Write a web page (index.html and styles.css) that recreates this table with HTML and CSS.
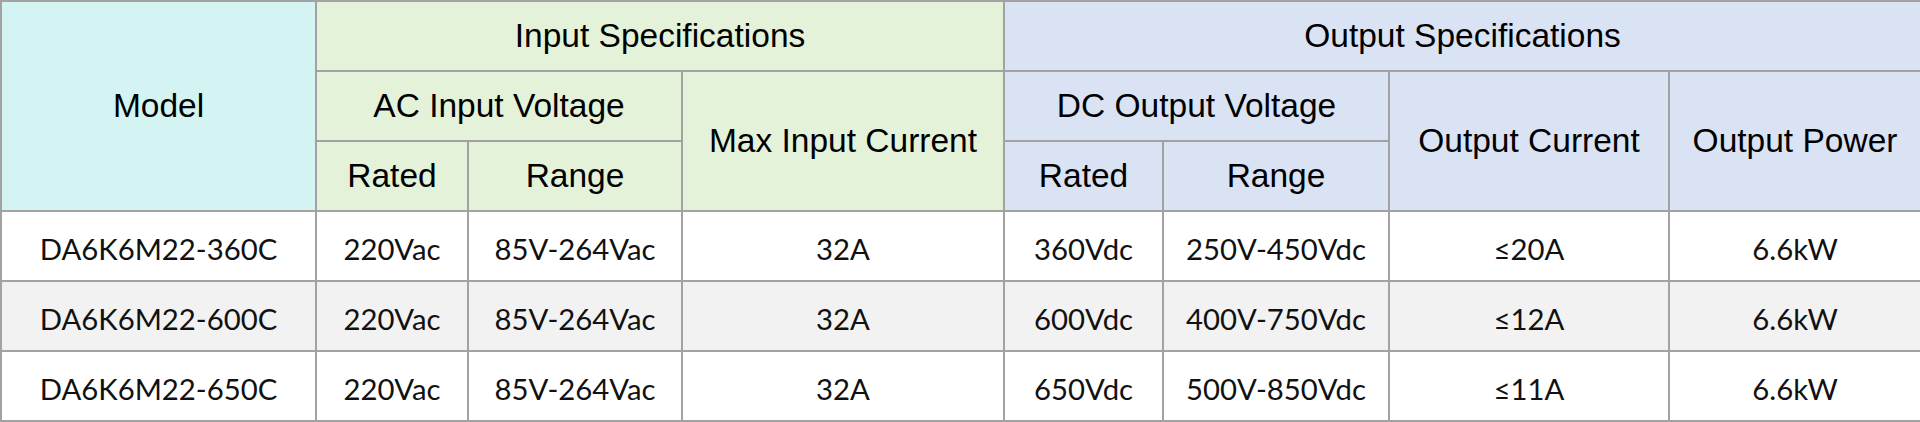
FILE: index.html
```html
<!DOCTYPE html>
<html>
<head>
<meta charset="utf-8">
<link rel="stylesheet" href="styles.css">
</head>
<body>
<table class="spec">
  <colgroup>
    <col class="c-model">
    <col class="c-irated">
    <col class="c-irange">
    <col class="c-imax">
    <col class="c-orated">
    <col class="c-orange">
    <col class="c-ocur">
    <col class="c-opow">
  </colgroup>
  <thead>
    <tr>
      <th rowspan="3" class="model">Model</th>
      <th colspan="3" class="in">Input Specifications</th>
      <th colspan="4" class="out">Output Specifications</th>
    </tr>
    <tr>
      <th colspan="2" class="in">AC Input Voltage</th>
      <th rowspan="2" class="in">Max Input Current</th>
      <th colspan="2" class="out">DC Output Voltage</th>
      <th rowspan="2" class="out">Output Current</th>
      <th rowspan="2" class="out">Output Power</th>
    </tr>
    <tr>
      <th class="in">Rated</th>
      <th class="in">Range</th>
      <th class="out">Rated</th>
      <th class="out">Range</th>
    </tr>
  </thead>
  <tbody>
    <tr>
      <td>DA6K6M22-360C</td><td>220Vac</td><td>85V-264Vac</td><td>32A</td>
      <td>360Vdc</td><td>250V-450Vdc</td><td>≤20A</td><td>6.6kW</td>
    </tr>
    <tr class="alt">
      <td>DA6K6M22-600C</td><td>220Vac</td><td>85V-264Vac</td><td>32A</td>
      <td>600Vdc</td><td>400V-750Vdc</td><td>≤12A</td><td>6.6kW</td>
    </tr>
    <tr>
      <td>DA6K6M22-650C</td><td>220Vac</td><td>85V-264Vac</td><td>32A</td>
      <td>650Vdc</td><td>500V-850Vdc</td><td>≤11A</td><td>6.6kW</td>
    </tr>
  </tbody>
</table>
</body>
</html>
```

FILE: styles.css
```css
html, body {
  margin: 0;
  padding: 0;
  background: #ffffff;
}

.spec {
  border-collapse: collapse;
  table-layout: fixed;
  width: 1920px;
  color: #000000;
}

.c-model { width: 315px; }
.c-irated { width: 152px; }
.c-irange { width: 214px; }
.c-imax { width: 322px; }
.c-orated { width: 159px; }
.c-orange { width: 226px; }
.c-ocur { width: 280px; }
.c-opow { width: 252px; }

.spec th,
.spec td {
  border: 2px solid #a2a2a2;
  text-align: center;
  vertical-align: middle;
  padding: 0;
  white-space: nowrap;
}

.spec tr {
  height: 70px;
}

.spec th {
  font-family: "Liberation Sans", Arial, sans-serif;
  font-weight: normal;
  font-size: 33.5px;
  line-height: 40px;
}

.spec td {
  font-family: Lato, "Open Sans", sans-serif;
  font-size: 29.3px;
  line-height: 40px;
  padding-top: 6px;
  color: #111111;
}

.model { background: #d4f4f3; }
.in { background: #e3f2d9; }
.out { background: #dae3f3; }

.alt td { background: #f2f2f2; }
```
